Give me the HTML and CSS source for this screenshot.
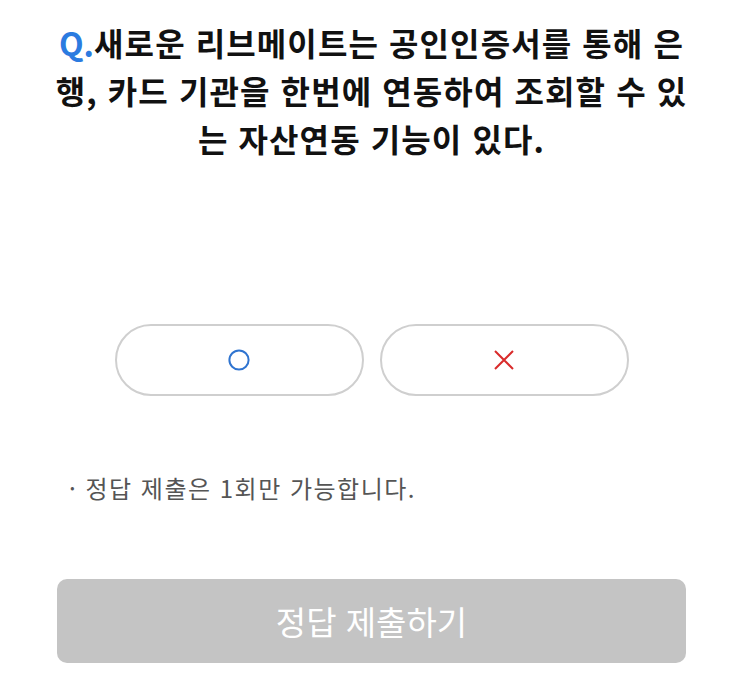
FILE: index.html
```html
<!DOCTYPE html>
<html lang="ko">
<head>
<meta charset="utf-8">
<link rel="stylesheet" href="styles.css">
</head>
<body>
<main class="quiz">
  <h1 class="question"><span class="q-mark">Q.</span>새로운 리브메이트는 공인인증서를 통해 은<br>행, 카드 기관을 한번에 연동하여 조회할 수 있<br>는 자산연동 기능이 있다.</h1>
  <div class="choices">
    <button class="choice" type="button">
      <svg width="24" height="24" viewBox="0 0 24 24"><circle cx="12" cy="12" r="9.6" fill="none" stroke="#2f74d0" stroke-width="2"/></svg>
    </button>
    <button class="choice" type="button">
      <svg width="24" height="24" viewBox="0 0 24 24"><path d="M3 3 L21 21 M21 3 L3 21" fill="none" stroke="#d92b2b" stroke-width="2"/></svg>
    </button>
  </div>
  <p class="note">· 정답 제출은 1회만 가능합니다.</p>
  <button class="submit" type="button">정답 제출하기</button>
</main>
</body>
</html>
```
FILE: styles.css
```css
html, body {
  margin: 0;
  padding: 0;
  background: #ffffff;
}
body {
  font-family: "Noto Sans CJK KR", "Noto Sans", sans-serif;
  color: #111;
}
.quiz {
  display: flex;
  flex-direction: column;
  align-items: center;
  padding: 0 57px;
}
.question {
  margin: 18px -20px 0;
  font-size: 32px;
  font-weight: 700;
  line-height: 48px;
  text-align: center;
  letter-spacing: 1.1px;
  color: #111;
  white-space: nowrap;
}
.q-mark {
  color: #2b7be0;
  letter-spacing: 0;
}
.choices {
  display: flex;
  gap: 16px;
  margin-top: 162px;
}
.choice {
  width: 249px;
  height: 72px;
  border: 2px solid #cfcfcf;
  border-radius: 36px;
  background: #fff;
  display: flex;
  align-items: center;
  justify-content: center;
  padding: 0;
}
.choice svg {
  display: block;
}
.note {
  align-self: flex-start;
  margin: 75px 0 0 12px;
  font-size: 24px;
  line-height: 34px;
  color: #555;
  letter-spacing: 1.5px;
}
.submit {
  margin-top: 74px;
  width: 629px;
  height: 84px;
  border: none;
  border-radius: 10px;
  background: #c4c4c4;
  color: #fff;
  font-family: "Noto Sans CJK KR", "Noto Sans", sans-serif;
  font-size: 33px;
  font-weight: 400;
}
```
